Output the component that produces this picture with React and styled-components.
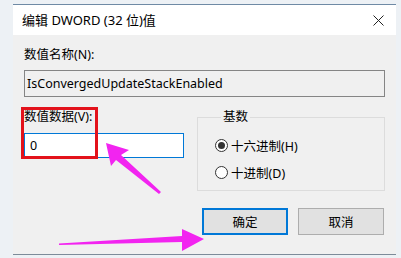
import React from "react";
import styled, { createGlobalStyle } from "styled-components";

const Global = createGlobalStyle`
  html, body { margin: 0; padding: 0; }
  body {
    background: #edf1f5;
    font-family: "Noto Sans", "Noto Sans CJK SC", sans-serif;
    font-size: 12.5px;
    color: #000;
  }
  * { box-sizing: border-box; }
`;

const Page = styled.div`
  position: relative;
  width: 401px;
  height: 258px;
  padding: 4px 0 0 13px;
  overflow: hidden;
`;

const Dialog = styled.div`
  width: 383px;
  height: 251px;
  background: #f0f0f0;
  border-top: 1px solid #6f8aa5;
  border-bottom: 1px solid #7d8b99;
  display: flex;
  flex-direction: column;
`;

const TitleBar = styled.div`
  height: 30px;
  background: #fff;
  display: flex;
  align-items: center;
  justify-content: space-between;
  padding: 0 10px 0 9px;
  flex-shrink: 0;
`;

const Title = styled.div`
  font-size: 13px;
  line-height: 16px;
`;

const Close = styled.div`
  width: 16px;
  height: 16px;
  display: flex;
  align-items: center;
  justify-content: center;
`;

const Body = styled.div`
  padding: 12px 11px 0 11px;
  display: flex;
  flex-direction: column;
`;

const Label = styled.div`
  line-height: 16px;
  font-size: 12.5px;
`;

const TextBox = styled.div`
  margin-top: 7px;
  height: 27px;
  border: 1px solid ${(p) => (p.$focus ? "#0078d7" : "#858585")};
  background: ${(p) => (p.$readonly ? "#f0f0f0" : "#fff")};
  display: flex;
  align-items: center;
  padding-left: ${(p) => (p.$focus ? "5px" : "2px")};
  font-size: 12.5px;
  ${(p) => (p.$focus ? "margin-top: 8px; height: 25px;" : "")}
`;

const Row = styled.div`
  display: flex;
  gap: 13px;
`;

const ValueColumn = styled.div`
  position: relative;
  width: 161px;
  padding-top: 12px;
  display: flex;
  flex-direction: column;
`;

const Highlight = styled.div`
  position: absolute;
  left: -3px;
  top: 10px;
  width: 77px;
  height: 52px;
  border: 3px solid #e3121b;
  pointer-events: none;
`;

const Group = styled.fieldset`
  margin: 12px 0 0 0;
  width: 189px;
  height: 82px;
  border: 1px solid #dcdcdc;
  padding: 10px 0 0 17px;
  display: flex;
  flex-direction: column;
  gap: 7px;
`;

const Legend = styled.legend`
  padding: 0 2px;
  margin-left: 6px;
  line-height: 16px;
  font-size: 12.5px;
`;

const RadioRow = styled.div`
  height: 20px;
  display: flex;
  align-items: center;
  gap: 3px;
`;

const RadioCircle = styled.span`
  width: 13px;
  height: 13px;
  border-radius: 50%;
  border: 1px solid #333;
  background: #fff;
  display: flex;
  align-items: center;
  justify-content: center;
  &::after {
    content: "";
    width: 7px;
    height: 7px;
    border-radius: 50%;
    background: ${(p) => (p.$checked ? "#333" : "transparent")};
  }
`;

const Buttons = styled.div`
  margin-top: 17px;
  display: flex;
  justify-content: flex-end;
  gap: 10px;
  padding-right: 1px;
`;

const Button = styled.div`
  width: 86px;
  height: 27px;
  background: #e1e1e1;
  border: ${(p) => (p.$default ? "2px solid #0078d7" : "1px solid #adadad")};
  display: flex;
  align-items: center;
  justify-content: center;
  font-size: 12.5px;
`;

const Overlay = styled.svg`
  position: absolute;
  left: 0;
  top: 0;
  pointer-events: none;
`;

export default function App() {
  return (
    <>
      <Global />
      <Page>
        <Dialog>
          <TitleBar>
            <Title>编辑 DWORD (32 位)值</Title>
            <Close>
              <svg width="11" height="11" viewBox="0 0 11 11">
                <path d="M0.5 0.5 L10.5 10.5 M10.5 0.5 L0.5 10.5" stroke="#222" strokeWidth="1" fill="none" />
              </svg>
            </Close>
          </TitleBar>
          <Body>
            <Label>数值名称(N):</Label>
            <TextBox $readonly>IsConvergedUpdateStackEnabled</TextBox>
            <Row>
              <ValueColumn>
                <Label>数值数据(V):</Label>
                <TextBox $focus>0</TextBox>
                <Highlight />
              </ValueColumn>
              <Group>
                <Legend>基数</Legend>
                <RadioRow>
                  <RadioCircle $checked />
                  <span>十六进制(H)</span>
                </RadioRow>
                <RadioRow>
                  <RadioCircle />
                  <span>十进制(D)</span>
                </RadioRow>
              </Group>
            </Row>
            <Buttons>
              <Button $default>确定</Button>
              <Button>取消</Button>
            </Buttons>
          </Body>
        </Dialog>
        <Overlay width="401" height="258" viewBox="0 0 401 258">
          <polygon
            points="106,143 129,150 121,155 161,192 159,194 116,160 111,166"
            fill="#f224f0"
          />
          <polygon
            points="59,243.5 182,236 182,229 204,239 182,251 182,242 59,245"
            fill="#f224f0"
          />
        </Overlay>
      </Page>
    </>
  );
}
